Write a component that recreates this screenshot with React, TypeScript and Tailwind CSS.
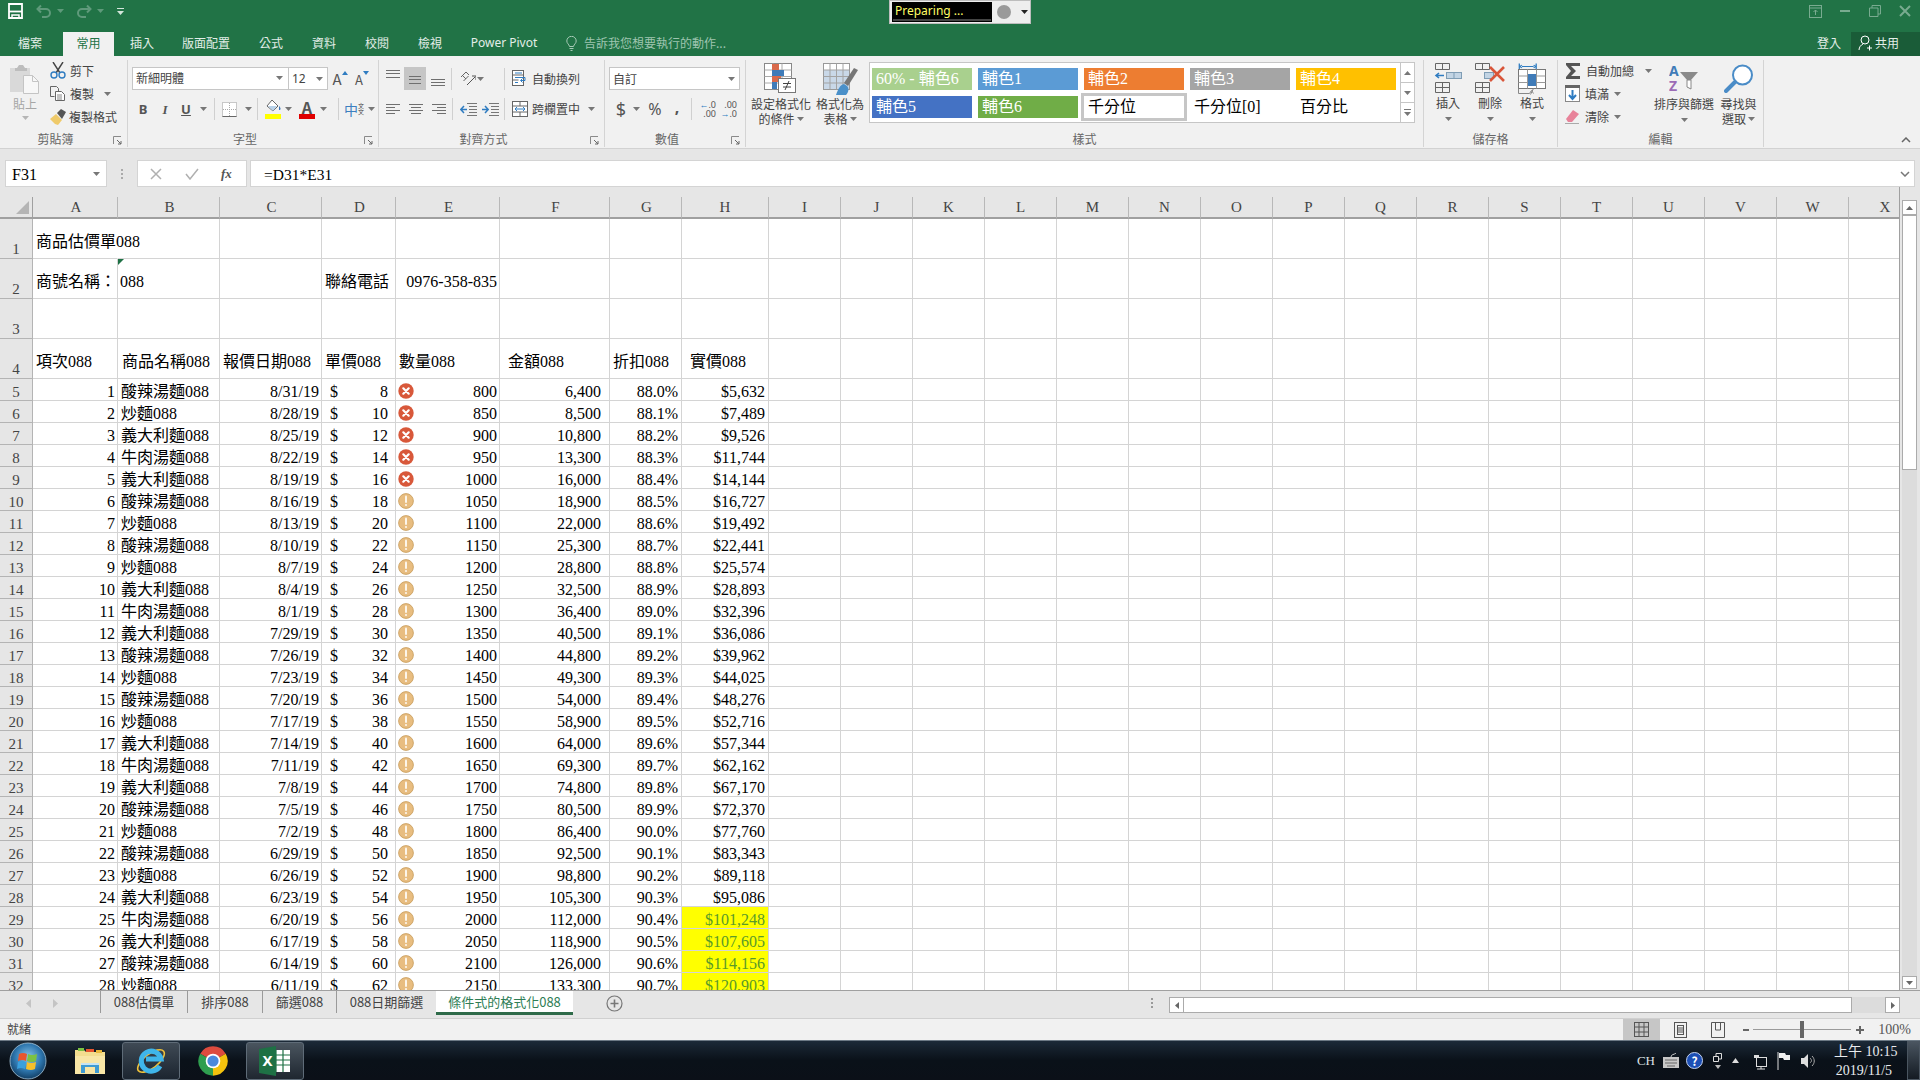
import React from 'react';

const SERIF = "[font-family:'Liberation_Serif','Noto_Sans_CJK_TC',serif]";
const UI = "[font-family:'Noto_Sans_CJK_TC','Noto_Sans',sans-serif]";

const Arrow = ({ c = '', fill = '#777' }: { c?: string; fill?: string }) => (
  <span className={'flex items-center justify-center shrink-0 ' + c}>
    <svg width="7" height="4" viewBox="0 0 7 4"><path d="M0 0h7L3.5 4z" fill={fill} /></svg>
  </span>
);

const Launcher = () => (
  <svg width="9" height="9" viewBox="0 0 9 9" className="absolute right-[5px] top-[5px]">
    <path d="M.5 8V.5H8" fill="none" stroke="#8a8a8a" />
    <path d="M4 4l4 4M8 5v3H5" fill="none" stroke="#666" />
  </svg>
);

const Sep = ({ c = '' }: { c?: string }) => <span className={'w-px h-[22px] bg-[#d0d0d0] shrink-0 ' + c} />;

function Group({ w, label, launcher, lc = '', children }: { w: string; label: string; launcher?: boolean; lc?: string; children: React.ReactNode }) {
  return (
    <div className={'h-[87px] mt-[4px] border-r border-[#d4d4d4] shrink-0 flex flex-col whitespace-nowrap ' + w}>
      <div className="h-[71px]">{children}</div>
      <div className={'relative h-[16px] text-center text-[12px] leading-[16px] text-[#666] ' + lc}>
        {label}
        {launcher && <Launcher />}
      </div>
    </div>
  );
}

const Lines = ({ ys, x1 = 1, x2 = 15, xs }: { ys: number[]; x1?: number; x2?: number; xs?: [number, number][] }) => (
  <svg width="16" height="23" viewBox="0 0 16 23">
    {ys.map((y, i) => (
      <path key={i} d={`M${xs ? xs[i][0] : x1} ${y + 0.5}H${xs ? xs[i][1] : x2}`} stroke="#6f6f6f" />
    ))}
  </svg>
);

/* ---------- ribbon icons ---------- */
const PasteIcon = () => (
  <svg width="30" height="30" viewBox="0 0 30 30">
    <rect x="0" y="4" width="20" height="24" fill="#d9d9d9" />
    <path d="M5 4h2l2-3h4l2 3h2v3H5z" fill="#bdbdbd" />
    <path d="M13.5 11.5h9l6 6v12h-15z" fill="#f7f7f7" stroke="#c4c4c4" />
    <path d="M22.5 11.5v6h6" fill="none" stroke="#c4c4c4" />
  </svg>
);
const Scissors = () => (
  <svg width="16" height="17" viewBox="0 0 16 17">
    <path d="M3 0l7 11M13 0L6 11" stroke="#444" strokeWidth="1.4" fill="none" />
    <circle cx="4" cy="13" r="3" fill="none" stroke="#2f7cc1" strokeWidth="1.4" />
    <circle cx="12" cy="13" r="3" fill="none" stroke="#2f7cc1" strokeWidth="1.4" />
  </svg>
);
const CopyIcon = () => (
  <svg width="15" height="15" viewBox="0 0 15 15">
    <path d="M.5.5h6l2 2v3M.5.5v10h4" fill="none" stroke="#666" />
    <path d="M5.5 5.5h6l3 3v6h-9z" fill="#fff" stroke="#666" />
    <path d="M7 9h5M7 11h5M7 13h5" stroke="#888" />
  </svg>
);
const Painter = () => (
  <svg width="17" height="17" viewBox="0 0 17 17">
    <path d="M0 11l6-5 6 6-4 5-3-1z" fill="#efca6a" />
    <path d="M7 5l4-4 5 3-4 7z" fill="#555" />
  </svg>
);
const BordersIcon = () => (
  <svg width="15" height="15" viewBox="0 0 15 15">
    <rect x=".5" y=".5" width="14" height="14" fill="#fff" stroke="#999" strokeDasharray="1 1" />
    <path d="M7.5 1v13M1 7.5h13" stroke="#aaa" strokeDasharray="1 1" />
    <path d="M.5 14.5h14" stroke="#666" />
  </svg>
);
const FillIcon = () => (
  <svg width="17" height="20" viewBox="0 0 17 20">
    <path d="M7 1l6 6-5 5-6-5z" fill="#fff" stroke="#666" />
    <path d="M3 7h9l-4 5z" fill="#b8d2ea" />
    <path d="M14 7c2 2 2 4 0 4z" fill="#3a73b5" />
    <rect x="0" y="15" width="16" height="5" fill="#ffff00" />
  </svg>
);
const FontColor = () => (
  <div className="flex flex-col items-center">
    <span className="text-[16px] leading-[14px] font-bold text-[#555]">A</span>
    <span className="w-[16px] h-[5px] bg-[#e00000]" />
  </div>
);
const PhoneticIcon = () => (
  <div className="flex items-center">
    <span className="text-[14px] leading-[16px] text-[#3d7fc0]">中</span>
    <span className="text-[6px] leading-[6px] text-[#444] w-[6px] whitespace-normal break-all">文文</span>
  </div>
);
const OrientIcon = () => (
  <svg width="16" height="16" viewBox="0 0 16 16">
    <path d="M1 6l5-5M3.5 10l5-5M2 4l4 4M6 1l3 3" stroke="#666" fill="none" />
    <path d="M7 14L15 6" stroke="#555" fill="none" />
    <path d="M12 5h4v4" stroke="#555" fill="none" />
  </svg>
);
const IndentL = () => (
  <svg width="17" height="13" viewBox="0 0 17 13">
    <path d="M7 .5h10M9 3.5h8M9 6.5h8M9 9.5h8M7 12.5h10" stroke="#777" />
    <path d="M7 6.5H1M4 3L.8 6.5 4 10" stroke="#2f7cc1" strokeWidth="1.5" fill="none" />
  </svg>
);
const IndentR = () => (
  <svg width="17" height="13" viewBox="0 0 17 13">
    <path d="M7 .5h10M9 3.5h8M9 6.5h8M9 9.5h8M7 12.5h10" stroke="#777" />
    <path d="M0 6.5h6M3 3l3.2 3.5L3 10" stroke="#2f7cc1" strokeWidth="1.5" fill="none" />
  </svg>
);
const WrapIcon = () => (
  <svg width="16" height="17" viewBox="0 0 16 17">
    <rect x=".5" y=".5" width="11" height="15" fill="#fff" stroke="#666" />
    <path d="M.5 5h11M.5 10h6" stroke="#666" />
    <path d="M3 3h7M3 7.5h10v3H9M3 12.5h3" stroke="#2f7cc1" fill="none" />
    <path d="M10.5 8.5L8.5 10.5l2 2" stroke="#2f7cc1" fill="none" />
  </svg>
);
const MergeIcon = () => (
  <svg width="16" height="16" viewBox="0 0 16 16">
    <rect x=".5" y=".5" width="15" height="15" fill="#fff" stroke="#666" />
    <path d="M.5 5h15M.5 11h15M8 .5V5M8 11v4.5" stroke="#666" />
    <path d="M3 8h10M5 6l-2 2 2 2M11 6l2 2-2 2" stroke="#2f7cc1" fill="none" />
  </svg>
);
const CondIcon = () => (
  <svg width="35" height="31" viewBox="0 0 35 31">
    <rect x=".5" y=".5" width="27" height="26" fill="#fff" stroke="#888" />
    <path d="M9 .5v26M18 .5v26M.5 7h27M.5 13.5h27M.5 20h27" stroke="#aaa" />
    <rect x="8" y="1" width="7" height="6" fill="#d9694a" />
    <rect x="8" y="7" width="12" height="6" fill="#3f7bb8" />
    <rect x="8" y="13" width="9" height="6" fill="#d9694a" />
    <rect x="8" y="19" width="5" height="7" fill="#3f7bb8" />
    <rect x="14.5" y="15.5" width="17" height="14" fill="#fff" stroke="#777" />
    <path d="M19 20.5h8M19 24h8M25 18l-4 9" stroke="#444" fill="none" />
  </svg>
);
const TableIcon = () => (
  <svg width="35" height="33" viewBox="0 0 35 33">
    <rect x=".5" y=".5" width="26" height="26" fill="#fff" stroke="#999" />
    <rect x="1" y="7" width="25" height="19" fill="#c9d8e8" />
    <path d="M7 .5v26M13.5 .5v26M20 .5v26M.5 7h26M.5 13.5h26M.5 20h26" stroke="#a3a3a3" />
    <path d="M35 7l-4-2-10 15 4 3z" fill="#777" />
    <path d="M21 21c-4 1-6 5-8 11h10c3-3 3-7 1-9z" fill="#4a90c9" />
  </svg>
);
const InsertIcon = () => (
  <svg width="28" height="31" viewBox="0 0 28 31">
    <path d="M1.5 .5h14v6h-14zM8.5 .5v6M1.5 19.5h14v10h-14zM8.5 19.5v10M1.5 24.5h14" fill="none" stroke="#666" />
    <rect x="12.5" y="9.5" width="15" height="6" fill="#c2d4e4" stroke="#7f9db5" />
    <path d="M20 9.5v6" stroke="#7f9db5" />
    <path d="M10 12.5H2M5 10l-3 2.5L5 15" stroke="#2f7cc1" strokeWidth="1.6" fill="none" />
  </svg>
);
const DeleteIcon = () => (
  <svg width="30" height="31" viewBox="0 0 30 31">
    <path d="M.5 .5h14v6H.5zM7.5 .5v6M.5 19.5h14v10H.5zM7.5 19.5v10M.5 24.5h14" fill="none" stroke="#666" />
    <rect x="9.5" y="9.5" width="9" height="6" fill="#c2d4e4" stroke="#7f9db5" />
    <path d="M15 4l14 14M29 4L15 18" stroke="#d9563a" strokeWidth="2.6" />
  </svg>
);
const FormatIcon = () => (
  <svg width="28" height="32" viewBox="0 0 28 32">
    <path d="M1 .5v6M14 .5v6M3 3.5h9M3 2L1.5 3.5 3 5M12 2l1.5 1.5L12 5" stroke="#2f7cc1" fill="none" transform="scale(1.3 1)" />
    <rect x=".5" y="6.5" width="27" height="19" fill="#fff" stroke="#777" />
    <path d="M9.5 6.5v19M18.5 6.5v19M.5 13h27M.5 19.5h27" stroke="#999" />
    <rect x="10" y="11" width="8" height="12" fill="#3f7bb8" />
    <path d="M.5 25.5v5h11l2-3 2 3M15.5 25.5l-3 6" fill="none" stroke="#888" />
  </svg>
);
const Sigma = () => (
  <svg width="16" height="16" viewBox="0 0 16 16" className="shrink-0"><path d="M1 0h14v3H6l5 5-5 5h9v3H1v-2l5-6-5-6z" fill="#555" /></svg>
);
const FillDown = () => (
  <svg width="15" height="17" viewBox="0 0 15 17" className="shrink-0">
    <rect x=".5" y=".5" width="14" height="16" fill="#fff" stroke="#888" />
    <rect x="0" y="0" width="15" height="3" fill="#666" />
    <path d="M7.5 5v9M4 10l3.5 4 3.5-4" stroke="#2f7cc1" strokeWidth="2" fill="none" />
  </svg>
);
const Eraser = () => (
  <svg width="15" height="15" viewBox="0 0 15 15" className="shrink-0">
    <path d="M8 1l6 4-7 8H3L1 10z" fill="#e8839a" />
    <path d="M0 14.5h14" stroke="#aaa" />
  </svg>
);
const SortIcon = () => (
  <svg width="30" height="28" viewBox="0 0 30 28">
    <text x="0" y="12" fontSize="14" fontWeight="700" fill="#3f7bb8" fontFamily="'Noto Sans',sans-serif">A</text>
    <text x="0" y="27" fontSize="14" fontWeight="700" fill="#9b6bb5" fontFamily="'Noto Sans',sans-serif">Z</text>
    <path d="M11 8h18l-7 8v9l-4-2v-7z" fill="#8a8a8a" />
    <path d="M18 16v7l4 2v-9z" fill="#fff" stroke="#888" />
  </svg>
);
const FindIcon = () => (
  <svg width="30" height="29" viewBox="0 0 30 29">
    <circle cx="18.5" cy="11" r="9.5" fill="#fff" stroke="#4a8cc7" strokeWidth="2" />
    <path d="M11 18L2 27" stroke="#4a8cc7" strokeWidth="4" strokeLinecap="round" />
  </svg>
);

/* ---------- data ---------- */
const N1 = '酸辣湯麵088', N2 = '炒麵088', N3 = '義大利麵088', N4 = '牛肉湯麵088';
const rows: [number, string, string, number, number, string, string, string][] = [
  [1, N1, '8/31/19', 8, 800, '6,400', '88.0%', '$5,632'],
  [2, N2, '8/28/19', 10, 850, '8,500', '88.1%', '$7,489'],
  [3, N3, '8/25/19', 12, 900, '10,800', '88.2%', '$9,526'],
  [4, N4, '8/22/19', 14, 950, '13,300', '88.3%', '$11,744'],
  [5, N3, '8/19/19', 16, 1000, '16,000', '88.4%', '$14,144'],
  [6, N1, '8/16/19', 18, 1050, '18,900', '88.5%', '$16,727'],
  [7, N2, '8/13/19', 20, 1100, '22,000', '88.6%', '$19,492'],
  [8, N1, '8/10/19', 22, 1150, '25,300', '88.7%', '$22,441'],
  [9, N2, '8/7/19', 24, 1200, '28,800', '88.8%', '$25,574'],
  [10, N3, '8/4/19', 26, 1250, '32,500', '88.9%', '$28,893'],
  [11, N4, '8/1/19', 28, 1300, '36,400', '89.0%', '$32,396'],
  [12, N3, '7/29/19', 30, 1350, '40,500', '89.1%', '$36,086'],
  [13, N1, '7/26/19', 32, 1400, '44,800', '89.2%', '$39,962'],
  [14, N2, '7/23/19', 34, 1450, '49,300', '89.3%', '$44,025'],
  [15, N1, '7/20/19', 36, 1500, '54,000', '89.4%', '$48,276'],
  [16, N2, '7/17/19', 38, 1550, '58,900', '89.5%', '$52,716'],
  [17, N3, '7/14/19', 40, 1600, '64,000', '89.6%', '$57,344'],
  [18, N4, '7/11/19', 42, 1650, '69,300', '89.7%', '$62,162'],
  [19, N3, '7/8/19', 44, 1700, '74,800', '89.8%', '$67,170'],
  [20, N1, '7/5/19', 46, 1750, '80,500', '89.9%', '$72,370'],
  [21, N2, '7/2/19', 48, 1800, '86,400', '90.0%', '$77,760'],
  [22, N1, '6/29/19', 50, 1850, '92,500', '90.1%', '$83,343'],
  [23, N2, '6/26/19', 52, 1900, '98,800', '90.2%', '$89,118'],
  [24, N3, '6/23/19', 54, 1950, '105,300', '90.3%', '$95,086'],
  [25, N4, '6/20/19', 56, 2000, '112,000', '90.4%', '$101,248'],
  [26, N3, '6/17/19', 58, 2050, '118,900', '90.5%', '$107,605'],
  [27, N1, '6/14/19', 60, 2100, '126,000', '90.6%', '$114,156'],
  [28, N2, '6/11/19', 62, 2150, '133,300', '90.7%', '$120,903'],
];
const colLetters = 'ABCDEFGHIJKLMNOPQRSTUVWX'.split('');
const GRID = 'grid grid-cols-[33px_85px_102px_102px_74px_104px_110px_72px_87px_repeat(15,72px)_51px]';

const XMark = () => (
  <svg width="16" height="16" viewBox="0 0 16 16" className="shrink-0 -mt-[3px]">
    <circle cx="8" cy="8" r="7.7" fill="#d8583a" />
    <path d="M5.3 5.3l5.4 5.4M10.7 5.3l-5.4 5.4" stroke="#fff" strokeWidth="2.2" strokeLinecap="round" />
  </svg>
);
const Bang = () => (
  <svg width="16" height="16" viewBox="0 0 16 16" className="shrink-0 -mt-[3px]">
    <circle cx="8" cy="8" r="7.4" fill="#e8bd80" stroke="#c79a58" strokeWidth=".8" />
    <path d="M8 3.4v5.6" stroke="#fdf6ea" strokeWidth="2" strokeLinecap="round" />
    <circle cx="8" cy="12" r="1.1" fill="#fdf6ea" />
  </svg>
);

const BASE = 'border-r border-b border-[#d4d4d4] flex items-center whitespace-nowrap leading-none text-[16px] text-black min-w-0';
const TALL = 'border-r border-b border-[#d4d4d4] h-[40px] flex items-start pt-[14px] whitespace-nowrap leading-[18px] text-[16px] text-black';

const RowHead = ({ n, tall }: { n: number; tall?: boolean }) => (
  <div className={'bg-[#e6e6e6] border-r border-b border-[#b4b4b4] text-[#444] text-[15px] flex justify-center leading-none ' + (tall ? 'h-[40px] items-end pb-[1px]' : 'h-[22px] items-center pt-[5px]')}>{n}</div>
);

const blanks = (count: number, cls: string, keyBase: string) =>
  Array.from({ length: count }, (_, i) => <div key={keyBase + i} className={cls} />);

function Sheet() {
  const tallRows: (string | null)[][] = [
    ['商品估價單088', null, null, null, null, null, null, null],
    ['商號名稱：', '088', null, '聯絡電話', '0976-358-835', null, null, null],
    [null, null, null, null, null, null, null, null],
    ['項次088', '商品名稱088', '報價日期088', '單價088', '數量088', '金額088', '折扣088', '實價088'],
  ];
  return (
    <div className={'w-[1899px] h-[803px] overflow-hidden shrink-0 ' + SERIF}>
      <div className={GRID + ' h-[32px] bg-[#e6e6e6] items-end'}>
        <div className="relative h-[22px] border-r border-b-2 border-[#a0a0a0] flex items-end justify-end pr-[3px] pb-[3px]">
          <svg width="13" height="13" viewBox="0 0 13 13"><path d="M13 0v13H0z" fill="#b5b5b5" /></svg>
        </div>
        {colLetters.map((c, i) => (
          <div
            key={c}
            className={
              'h-[22px] border-r last:border-r-0 border-b-2 border-[#b8b8b8] border-b-[#a0a0a0] flex items-center justify-center text-[15px] text-[#444] leading-none ' +
              (i < 7 ? 'pl-[2px]' : i === 23 ? 'pl-[21px]' : '')
            }
          >
            {c}
          </div>
        ))}
      </div>
      <div className={GRID + ' bg-white'}>
        {tallRows.map((r, ri) => (
          <React.Fragment key={ri}>
            <RowHead n={ri + 1} tall />
            {r.map((t, ci) => {
              const pad =
                ri === 3 && (ci === 5 || ci === 7) ? 'pl-[8px]' : ri === 1 && ci === 4 ? 'justify-end pr-[2px]' : ci === 1 && ri === 1 ? 'pl-[2px]' : ri === 3 && ci === 1 ? 'pl-[4px]' : 'pl-[3px]';
              const extra = ri === 0 && ci === 0 ? ' border-r-transparent' : '';
              return (
                <div key={ci} className={TALL + ' relative ' + pad + extra}>
                  {t}
                  {ri === 1 && ci === 1 && (
                    <svg width="6" height="6" viewBox="0 0 6 6" className="absolute left-0 top-0"><path d="M0 0h6L0 6z" fill="#1e7145" /></svg>
                  )}
                </div>
              );
            })}
            {blanks(16, TALL, 't' + ri + '-')}
          </React.Fragment>
        ))}
        {rows.map((r, i) => {
          const hi = i >= 24;
          return (
            <React.Fragment key={r[0]}>
              <RowHead n={i + 5} />
              <div className={BASE + ' h-[22px] justify-end pr-[2px] pt-[5px]'}>{r[0]}</div>
              <div className={BASE + ' h-[22px] pl-[3px] pt-[5px]'}>{r[1]}</div>
              <div className={BASE + ' h-[22px] justify-end pr-[2px] pt-[5px]'}>{r[2]}</div>
              <div className={BASE + ' h-[22px] justify-between pl-[8px] pr-[7px] pt-[5px]'}>
                <span>$</span>
                <span>{r[3]}</span>
              </div>
              <div className={BASE + ' h-[22px] justify-between pl-[2px] pr-[2px] pt-[5px]'}>
                {i < 5 ? <XMark /> : <Bang />}
                <span>{r[4]}</span>
              </div>
              <div className={BASE + ' h-[22px] justify-end pr-[8px] pt-[5px]'}>{r[5]}</div>
              <div className={BASE + ' h-[22px] justify-end pr-[3px] pt-[5px]'}>{r[6]}</div>
              <div className={hi ? 'border-r border-b border-[#d4d4d4] flex items-center whitespace-nowrap leading-none text-[16px] min-w-0 h-[22px] justify-end pr-[3px] pt-[5px] bg-[#ffff00] text-[#5a9a2a]' : BASE + ' h-[22px] justify-end pr-[3px] pt-[5px]'}>{r[7]}</div>
              {blanks(16, BASE + ' h-[22px]', 'r' + i + '-')}
            </React.Fragment>
          );
        })}
      </div>
    </div>
  );
}

const styleCell = 'h-[22px] flex items-center pl-[4px] text-[16px] leading-none whitespace-nowrap ' + SERIF;

export default function App() {
  return (
    <div className={'relative w-[1920px] h-[1080px] overflow-hidden flex flex-col bg-[#f1f1f1] ' + UI}>
      {/* title bar */}
      <div className="h-[32px] bg-[#217346] flex items-start pt-[3px] shrink-0">
        <div className="h-[16px] w-full flex items-center">
          <svg width="15" height="16" viewBox="0 0 15 16" className="ml-[8px]">
            <path d="M1 1h13v14H1z" fill="none" stroke="#fff" strokeWidth="1.8" />
            <path d="M1 8.5h13" stroke="#fff" strokeWidth="1.8" />
            <path d="M4 15v-3h7v3" fill="none" stroke="#fff" strokeWidth="1.5" />
          </svg>
          <svg width="16" height="14" viewBox="0 0 16 14" className="ml-[13px]">
            <path d="M2 5h8a4 4 0 0 1 0 8H6M5 1.5L1.5 5 5 8.5" fill="none" stroke="#5f9a7b" strokeWidth="2" />
          </svg>
          <Arrow c="w-[10px] ml-[3px]" fill="#5f9a7b" />
          <svg width="16" height="14" viewBox="0 0 16 14" className="ml-[11px]">
            <path d="M14 5H6a4 4 0 0 0 0 8h4M11 1.5L14.5 5 11 8.5" fill="none" stroke="#5f9a7b" strokeWidth="2" />
          </svg>
          <Arrow c="w-[10px] ml-[3px]" fill="#5f9a7b" />
          <svg width="7" height="7" viewBox="0 0 7 7" className="ml-[12px]">
            <path d="M0 .5h7" stroke="#d5e6dc" />
            <path d="M0 3h7L3.5 7z" fill="#d5e6dc" />
          </svg>
          <div className="ml-auto flex items-center">
            <div className="w-[30px] flex justify-center">
              <svg width="13" height="13" viewBox="0 0 13 13"><rect x=".5" y=".5" width="12" height="12" fill="none" stroke="#79ab90" /><path d="M.5 3h12M6.5 10V5M4.5 7l2-2 2 2" stroke="#79ab90" fill="none" /></svg>
            </div>
            <div className="w-[30px] flex justify-center"><span className="w-[10px] h-[2px] bg-[#79ab90]" /></div>
            <div className="w-[30px] flex justify-center">
              <svg width="12" height="12" viewBox="0 0 12 12"><path d="M3 3V.5h8.500V9H9M.5 3h8.500v8.500H.5z" fill="none" stroke="#79ab90" /></svg>
            </div>
            <div className="w-[30px] flex justify-center">
              <svg width="12" height="12" viewBox="0 0 12 12"><path d="M1 1l10 10M11 1L1 11" stroke="#79ab90" strokeWidth="2" /></svg>
            </div>
          </div>
        </div>
      </div>

      {/* tabs */}
      <div className="h-[24px] bg-[#217346] flex items-center pb-[2px] shrink-0 text-[12px] text-[#e3eee8]">
        <div className="w-[60px] text-center">檔案</div>
        <div className="ml-[3px] w-[51px] h-[24px] self-start bg-[#f1f1f1] text-[#217346] flex items-center justify-center pb-[2px]">常用</div>
        <div className="w-[56px] text-center">插入</div>
        <div className="w-[72px] text-center">版面配置</div>
        <div className="w-[58px] text-center">公式</div>
        <div className="w-[48px] text-center">資料</div>
        <div className="w-[58px] text-center">校閱</div>
        <div className="w-[48px] text-center">檢視</div>
        <div className="w-[100px] text-center [font-family:'Noto_Sans',sans-serif]">Power Pivot</div>
        <svg width="11" height="15" viewBox="0 0 11 15" className="ml-[12px]">
          <path d="M3.5 10.5C3 8 .8 7.5.8 5a4.700 4.700 0 0 1 9.400 0c0 2.500-2.200 3-2.700 5.500z" fill="none" stroke="#a7cab6" />
          <path d="M3.500 12.500h4M4.500 14.500h2" stroke="#a7cab6" />
        </svg>
        <div className="ml-[7px] text-[#9fc5b0]">告訴我您想要執行的動作...</div>
        <div className="ml-auto mr-[10px]">登入</div>
        <div className="w-[69px] h-[24px] self-start bg-[#1a5c38] flex items-center pl-[7px] pb-[2px] gap-[3px]">
          <svg width="14" height="16" viewBox="0 0 14 16">
            <circle cx="7" cy="5" r="4" fill="none" stroke="#fff" />
            <path d="M1 15c0-3 2-5 4-6M9 13h5M11.500 10.500v5" stroke="#fff" fill="none" />
          </svg>
          <span>共用</span>
        </div>
      </div>

      {/* ribbon */}
      <div className="h-[93px] flex shrink-0 text-[12px] text-[#444] border-b border-[#d2d2d2] leading-none">
        <Group w="w-[128px]" label="剪貼簿" launcher lc="pr-[16px]">
          <div className="flex">
            <div className="w-[50px] flex flex-col items-center pt-[4px] text-[#a6a6a6]">
              <PasteIcon />
              <div className="mt-[3px] leading-[14px]">貼上</div>
              <Arrow c="mt-[5px]" fill="#b5b5b5" />
            </div>
            <div className="-mt-[1px] flex flex-col">
              <div className="h-[23px] flex items-center gap-[4px]"><Scissors /><span>剪下</span></div>
              <div className="h-[23px] flex items-center gap-[5px]"><CopyIcon /><span>複製</span><Arrow c="ml-[5px]" /></div>
              <div className="h-[23px] flex items-center gap-[2px]"><Painter /><span>複製格式</span></div>
            </div>
          </div>
        </Group>

        <Group w="w-[251px]" label="字型" launcher lc="pr-[16px]">
          <div className="pt-[7px] pl-[4px]">
            <div className="flex items-center">
              <div className="w-[196px] h-[23px] bg-white border border-[#c6c6c6] flex">
                <div className="w-[156px] flex items-center pl-[3px] pb-[1px] border-r border-[#c6c6c6]">新細明體<Arrow c="ml-auto mr-[5px]" /></div>
                <div className="flex-1 flex items-center pl-[3px] [font-family:'Noto_Sans',sans-serif]">12<Arrow c="ml-auto mr-[4px]" /></div>
              </div>
              <div className="ml-[1px] w-[22px] flex justify-center items-start text-[#555]"><span className="text-[15px]">A</span><svg width="6" height="4" viewBox="0 0 6 4"><path d="M3 0l3 4H0z" fill="#2f7cc1" /></svg></div>
              <div className="w-[22px] flex justify-center items-start text-[#555]"><span className="text-[13px] mt-[2px]">A</span><svg width="6" height="4" viewBox="0 0 6 4"><path d="M3 4L0 0h6z" fill="#2f7cc1" /></svg></div>
            </div>
            <div className="mt-[7px] h-[24px] flex items-center">
              <span className="w-[22px] text-center font-bold text-[13px] text-[#555] [font-family:'Noto_Sans',sans-serif]">B</span>
              <span className="w-[22px] text-center italic font-bold text-[13px] text-[#555] [font-family:'Liberation_Serif',serif]">I</span>
              <span className="w-[20px] text-center underline font-bold text-[13px] text-[#555] [font-family:'Noto_Sans',sans-serif]">U</span>
              <Arrow c="w-[14px]" />
              <Sep c="ml-[4px]" />
              <span className="ml-[7px] w-[15px] flex"><BordersIcon /></span>
              <Arrow c="w-[14px] ml-[4px]" />
              <Sep c="ml-[2px]" />
              <span className="ml-[7px] w-[17px] flex"><FillIcon /></span>
              <Arrow c="w-[12px]" />
              <span className="ml-[3px] w-[20px] flex justify-center"><FontColor /></span>
              <Arrow c="w-[12px]" />
              <Sep c="ml-[9px]" />
              <span className="ml-[5px] w-[21px] flex"><PhoneticIcon /></span>
              <Arrow c="w-[12px]" />
            </div>
          </div>
        </Group>

        <Group w="w-[226px]" label="對齊方式" launcher lc="pr-[16px]">
          <div className="pt-[7px]">
            <div className="h-[23px] flex items-center">
              <span className="ml-[6px] w-[16px] flex"><Lines ys={[3, 6, 10]} /></span>
              <span className="ml-[3px] w-[22px] h-[23px] bg-[#c6c6c6] flex justify-center"><Lines ys={[9, 12, 16]} x1={2} x2={14} /></span>
              <span className="ml-[4px] w-[16px] flex"><Lines ys={[12, 15, 18]} /></span>
              <Sep c="ml-[5px]" />
              <span className="ml-[8px] w-[16px] flex"><OrientIcon /></span>
              <Arrow c="w-[9px]" />
              <Sep c="ml-[19px]" />
              <span className="ml-[7px] w-[16px] flex"><WrapIcon /></span>
              <span className="ml-[4px]">自動換列</span>
            </div>
            <div className="mt-[7px] h-[24px] flex items-center">
              <span className="ml-[6px] w-[16px] flex"><Lines ys={[6, 9, 12, 15]} xs={[[1, 15], [1, 10], [1, 15], [1, 10]]} /></span>
              <span className="ml-[7px] w-[16px] flex"><Lines ys={[6, 9, 12, 15]} xs={[[1, 15], [3, 13], [1, 15], [3, 13]]} /></span>
              <span className="ml-[7px] w-[16px] flex"><Lines ys={[6, 9, 12, 15]} xs={[[1, 15], [6, 15], [1, 15], [6, 15]]} /></span>
              <Sep c="ml-[5px]" />
              <span className="ml-[7px] w-[17px] flex"><IndentL /></span>
              <span className="ml-[5px] w-[17px] flex"><IndentR /></span>
              <Sep c="ml-[5px]" />
              <span className="ml-[7px] w-[16px] flex"><MergeIcon /></span>
              <span className="ml-[4px]">跨欄置中</span>
              <Arrow c="ml-[8px]" />
            </div>
          </div>
        </Group>

        <Group w="w-[141px]" label="數值" launcher lc="pr-[16px]">
          <div className="pt-[7px] pl-[4px]">
            <div className="w-[131px] h-[23px] bg-white border border-[#c6c6c6] flex items-center pl-[3px]">自訂<Arrow c="ml-auto mr-[4px]" /></div>
            <div className="mt-[7px] h-[24px] flex items-center [font-family:'Noto_Sans',sans-serif] text-[#555]">
              <span className="ml-[2px] w-[20px] text-center text-[18px]">$</span>
              <Arrow c="w-[11px]" />
              <span className="ml-[3px] w-[20px] text-center text-[16px]">%</span>
              <span className="ml-[2px] w-[20px] text-center text-[16px] font-bold -mt-[4px]">,</span>
              <Sep c="ml-[4px]" />
              <span className="ml-[4px] w-[20px] flex flex-col items-end text-[9px] leading-[9px]">
                <span className="flex items-center"><span className="text-[#2f7cc1] text-[9px]">←</span>.0</span><span>.00</span>
              </span>
              <span className="ml-[1px] w-[20px] flex flex-col items-end text-[9px] leading-[9px]">
                <span>.00</span><span className="flex items-center"><span className="text-[#2f7cc1] text-[9px]">→</span>.0</span>
              </span>
            </div>
          </div>
        </Group>

        <Group w="w-[678px]" label="樣式">
          <div className="flex">
            <div className="ml-[4px] w-[62px] flex flex-col items-center pt-[3px]">
              <CondIcon />
              <div className="mt-[2px] leading-[15px] text-center whitespace-nowrap">設定格式化</div>
              <div className="leading-[15px] flex items-center">的條件<Arrow c="ml-[2px]" /></div>
            </div>
            <div className="w-[56px] flex flex-col items-center pt-[3px]">
              <TableIcon />
              <div className="leading-[15px] whitespace-nowrap">格式化為</div>
              <div className="leading-[15px] flex items-center">表格<Arrow c="ml-[2px]" /></div>
            </div>
            <div className="ml-[1px] mt-[2px] w-[546px] h-[61px] bg-white border border-[#c6c6c6] flex">
              <div className="w-[530px] pl-[2px] pt-[5px] grid grid-cols-[repeat(5,100px)] gap-x-[6px] gap-y-[6px] auto-rows-[22px]">
                <div className={styleCell + ' bg-[#a9d08e] text-white'}>60% - 輔色6</div>
                <div className={styleCell + ' bg-[#5b9bd5] text-white'}>輔色1</div>
                <div className={styleCell + ' bg-[#ed7d31] text-white'}>輔色2</div>
                <div className={styleCell + ' bg-[#a5a5a5] text-white'}>輔色3</div>
                <div className={styleCell + ' bg-[#ffc000] text-white'}>輔色4</div>
                <div className={styleCell + ' bg-[#4472c4] text-white'}>輔色5</div>
                <div className={styleCell + ' bg-[#70ad47] text-white'}>輔色6</div>
                <div className={styleCell + ' bg-white text-black ring-[3px] ring-[#c6c6c6]'}>千分位</div>
                <div className={styleCell + ' text-black'}>千分位[0]</div>
                <div className={styleCell + ' text-black'}>百分比</div>
              </div>
              <div className="flex-1 flex flex-col border-l border-[#c6c6c6] bg-white">
                <div className="h-[20px] flex items-center justify-center border-b border-[#c6c6c6]"><svg width="7" height="4" viewBox="0 0 7 4"><path d="M3.500 0L7 4H0z" fill="#777" /></svg></div>
                <div className="h-[20px] flex items-center justify-center border-b border-[#c6c6c6]"><svg width="7" height="4" viewBox="0 0 7 4"><path d="M0 0h7L3.500 4z" fill="#777" /></svg></div>
                <div className="flex-1 flex items-center justify-center"><svg width="7" height="7" viewBox="0 0 7 7"><path d="M0 .5h7" stroke="#777" /><path d="M0 3h7L3.500 7z" fill="#777" /></svg></div>
              </div>
            </div>
          </div>
        </Group>

        <Group w="w-[134px]" label="儲存格">
          <div className="flex pl-[3px]">
            {[
              { l: '插入', i: <InsertIcon /> },
              { l: '刪除', i: <DeleteIcon /> },
              { l: '格式', i: <FormatIcon /> },
            ].map((b) => (
              <div key={b.l} className="w-[42px] flex flex-col items-center pt-[3px]">
                <div className="h-[32px] flex items-start">{b.i}</div>
                <div className="leading-[15px]">{b.l}</div>
                <Arrow c="mt-[7px]" />
              </div>
            ))}
          </div>
        </Group>

        <Group w="w-[206px]" label="編輯">
          <div className="flex">
            <div className="ml-[7px] w-[89px] shrink-0 -mt-[1px] flex flex-col">
              <div className="h-[23px] flex items-center gap-[5px]"><Sigma /><span>自動加總</span><Arrow c="ml-[6px]" /></div>
              <div className="h-[23px] flex items-center gap-[5px]"><FillDown /><span>填滿</span><Arrow /></div>
              <div className="h-[23px] flex items-center gap-[5px]"><Eraser /><span>清除</span><Arrow /></div>
            </div>
            <div className="w-[60px] flex flex-col items-center pt-[4px]">
              <div className="h-[32px] flex items-start"><SortIcon /></div>
              <div className="leading-[15px] whitespace-nowrap">排序與篩選</div>
              <Arrow c="mt-[7px]" />
            </div>
            <div className="w-[50px] flex flex-col items-center pt-[4px]">
              <div className="h-[32px] flex items-start"><FindIcon /></div>
              <div className="leading-[15px]">尋找與</div>
              <div className="leading-[15px] flex items-center">選取<Arrow c="ml-[2px]" /></div>
            </div>
          </div>
        </Group>

        <div className="flex-1 flex items-end justify-end pr-[9px] pb-[5px]">
          <svg width="10" height="6" viewBox="0 0 10 6"><path d="M1 5l4-4 4 4" fill="none" stroke="#666" strokeWidth="1.5" /></svg>
        </div>
      </div>

      {/* formula bar */}
      <div className="h-[38px] bg-[#e6e6e6] pt-[11px] flex shrink-0">
        <div className={'ml-[5px] w-[102px] h-[27px] bg-white border border-[#d4d4d4] flex items-center pl-[6px] pt-[2px] text-[16px] text-black ' + SERIF}>
          F31
          <Arrow c="ml-auto mr-[6px] -mt-[2px]" />
        </div>
        <div className="w-[30px] flex flex-col items-center justify-center gap-[2px]">
          <span className="w-[2px] h-[2px] bg-[#aaa]" /><span className="w-[2px] h-[2px] bg-[#aaa]" /><span className="w-[2px] h-[2px] bg-[#aaa]" />
        </div>
        <div className="w-[110px] h-[27px] bg-white border border-[#d4d4d4] flex items-center">
          <svg width="12" height="12" viewBox="0 0 12 12" className="ml-[12px]"><path d="M1 1l10 10M11 1L1 11" stroke="#b0b0b0" strokeWidth="1.5" /></svg>
          <svg width="14" height="12" viewBox="0 0 14 12" className="ml-[23px]"><path d="M1 6l4 5 8-10" fill="none" stroke="#b0b0b0" strokeWidth="1.5" /></svg>
          <span className={'ml-[22px] italic font-bold text-[13px] text-[#555] ' + SERIF}>fx</span>
        </div>
        <div className={'ml-[3px] w-[1665px] h-[27px] bg-white border border-[#d4d4d4] flex items-center pl-[13px] pt-[2px] text-[15.5px] text-black ' + SERIF}>
          =D31*E31
          <svg width="10" height="6" viewBox="0 0 10 6" className="ml-auto mr-[4px] -mt-[2px]"><path d="M1 1l4 4 4-4" fill="none" stroke="#777" strokeWidth="1.500" /></svg>
        </div>
      </div>

      {/* sheet */}
      <div className="h-[803px] flex shrink-0 bg-[#e6e6e6] border-b border-[#a0a0a0] box-content">
        <Sheet />
        <div className="w-[21px] border-l border-[#a0a0a0] flex flex-col pl-[2px] pt-[13px] pb-[1px]">
          <div className="w-[15px] h-[15px] bg-white border border-[#ababab] flex items-center justify-center"><svg width="7" height="4" viewBox="0 0 7 4"><path d="M3.500 0L7 4H0z" fill="#666" /></svg></div>
          <div className="w-[15px] h-[255px] bg-white border border-[#ababab]" />
          <div className="w-[15px] flex-1 bg-[#dcdcdc]" />
          <div className="w-[15px] h-[13px] bg-white border border-[#ababab] flex items-center justify-center"><svg width="7" height="4" viewBox="0 0 7 4"><path d="M0 0h7L3.500 4z" fill="#666" /></svg></div>
        </div>
      </div>

      {/* sheet tabs */}
      <div className="h-[27px] bg-[#e6e6e6] flex shrink-0 text-[13px] text-[#444] whitespace-nowrap">
        <div className="w-[100px] flex items-center pl-[26px] gap-[22px] pb-[3px]">
          <svg width="5" height="9" viewBox="0 0 5 9"><path d="M5 0v9L0 4.500z" fill="#c4c4c4" /></svg>
          <svg width="5" height="9" viewBox="0 0 5 9"><path d="M0 0v9l5-4.500z" fill="#c4c4c4" /></svg>
        </div>
        <div className="w-[87px] h-[22px] border-l border-[#9a9a9a] flex items-center justify-center">088估價單</div>
        <div className="w-[75px] h-[22px] border-l border-[#9a9a9a] flex items-center justify-center">排序088</div>
        <div className="w-[74px] h-[22px] border-l border-[#9a9a9a] flex items-center justify-center">篩選088</div>
        <div className="w-[100px] h-[22px] border-l border-[#9a9a9a] flex items-center justify-center">088日期篩選</div>
        <div className="w-[137px] h-[24px] bg-white border-b-[3px] border-[#2f6b4a] flex items-center justify-center text-[#2e7d55]">條件式的格式化088</div>
        <div className="ml-[33px] h-[27px] flex items-center pb-[3px]">
          <svg width="17" height="17" viewBox="0 0 17 17"><circle cx="8.500" cy="8.500" r="7.500" fill="none" stroke="#777" strokeWidth="1.200" /><path d="M8.500 4.500v8M4.500 8.500h8" stroke="#777" strokeWidth="1.600" /></svg>
        </div>
        <div className="ml-[528px] h-[24px] flex flex-col justify-center gap-[2px]">
          <span className="w-[2px] h-[2px] bg-[#999]" /><span className="w-[2px] h-[2px] bg-[#999]" /><span className="w-[2px] h-[2px] bg-[#999]" />
        </div>
        <div className="ml-[16px] mt-[6px] h-[16px] flex">
          <div className="w-[15px] bg-white border border-[#ababab] flex items-center justify-center"><svg width="4" height="7" viewBox="0 0 4 7"><path d="M4 0v7L0 3.500z" fill="#666" /></svg></div>
          <div className="w-[668px] bg-white border border-l-0 border-[#ababab]" />
          <div className="w-[33px] bg-[#dcdcdc]" />
          <div className="w-[15px] bg-white border border-[#ababab] flex items-center justify-center"><svg width="4" height="7" viewBox="0 0 4 7"><path d="M0 0v7l4-3.500z" fill="#666" /></svg></div>
        </div>
      </div>

      {/* status bar */}
      <div className="h-[22px] bg-[#f1f1f1] border-t border-[#d0d0d0] flex items-center shrink-0 text-[12px] text-[#444]">
        <span className="ml-[7px] pb-[2px]">就緒</span>
        <div className="ml-auto w-[37px] h-full bg-[#c6c6c6] flex items-center justify-center">
          <svg width="15" height="15" viewBox="0 0 15 15"><rect x=".5" y=".5" width="14" height="14" fill="none" stroke="#555" /><path d="M5 .5v14M10 .5v14M.5 5h14M.5 10h14" stroke="#555" /></svg>
        </div>
        <div className="w-[40px] flex justify-center">
          <svg width="13" height="16" viewBox="0 0 13 16"><rect x=".5" y=".5" width="12" height="15" fill="none" stroke="#555" /><rect x="3.500" y="3.500" width="6" height="9" fill="none" stroke="#555" /><path d="M4 6h5M4 8h5M4 10h5" stroke="#555" /></svg>
        </div>
        <div className="w-[36px] flex justify-center">
          <svg width="14" height="16" viewBox="0 0 14 16"><path d="M.5 15.500V.5h13v15zM4.500 1v7h5V1" fill="none" stroke="#555" /></svg>
        </div>
        <span className="ml-[7px] w-[6px] h-[2px] bg-[#666]" />
        <div className="ml-[4px] w-[98px] h-px bg-[#9a9a9a] relative flex justify-center">
          <span className="absolute top-[-8px] w-[4px] h-[17px] bg-[#666]" />
        </div>
        <svg width="8" height="8" viewBox="0 0 8 8" className="ml-[5px]"><path d="M4 0v8M0 4h8" stroke="#666" strokeWidth="2" /></svg>
        <span className={'ml-[14px] mr-[9px] text-[14px] text-[#555] ' + SERIF}>100%</span>
      </div>

      {/* taskbar */}
      <div className="h-[40px] border-t border-[#6d7a85] bg-linear-to-b from-[#1c2a38] via-[#0a1119] to-[#0b1018] flex items-center shrink-0 text-white">
        <div className="w-[58px] flex justify-center pr-[3px]">
          <svg width="38" height="38" viewBox="0 0 38 38">
            <defs>
              <radialGradient id="orb" cx="50%" cy="40%" r="60%"><stop offset="0%" stopColor="#8cc6ea" /><stop offset="60%" stopColor="#2f78b0" /><stop offset="100%" stopColor="#123f66" /></radialGradient>
            </defs>
            <circle cx="19" cy="19" r="18" fill="url(#orb)" stroke="#a7c7dc" strokeWidth=".8" />
            <path d="M10 12q4-2 8 0l-1 7q-4-2-8 0z" fill="#e8562e" />
            <path d="M19 12q4 2 9 0l-1 7q-4 2-9 0z" fill="#7cc242" />
            <path d="M9 20q4-2 8 0l-1 7q-4-2-8 0z" fill="#3aa0de" />
            <path d="M18 20q4 2 9 0l-1 7q-4 2-9 0z" fill="#f6c02c" />
          </svg>
        </div>
        <div className="w-[64px] flex justify-center">
          <svg width="32" height="30" viewBox="0 0 32 30">
            <path d="M1 4h9l2 2h19v22H1z" fill="#f3dd8f" />
            <path d="M4 2h6v3H4z" fill="#7cc242" /><path d="M12 3h8v3h-8z" fill="#e8562e" /><path d="M22 4h6v3h-6z" fill="#e9b83c" />
            <path d="M1 10h30v18H1z" fill="#f8e6a6" />
            <path d="M7 27V17h18v10h-4v-6H11v6z" fill="#3f9bd3" />
            <path d="M7 17h18v2H7z" fill="#c5e3f3" />
          </svg>
        </div>
        <div className="w-[58px] h-[38px] rounded-[3px] border border-[#5f6c78] bg-linear-to-b from-[#3f4a55] to-[#1c2530] flex items-center justify-center">
          <svg width="32" height="32" viewBox="0 0 32 32">
            <ellipse cx="16" cy="16" rx="16" ry="7" transform="rotate(-38 16 16)" fill="none" stroke="#f0c23a" strokeWidth="1.600" />
            <path d="M25 21a10 10 0 1 1 1-7H11" fill="none" stroke="#3fb5ea" strokeWidth="5" />
          </svg>
        </div>
        <div className="w-[66px] flex justify-center">
          <svg width="32" height="32" viewBox="0 0 24 24">
            <path d="M12 12L2.470 6.500A11 11 0 0 1 21.530 6.500z" fill="#dd4b3e" />
            <path d="M12 12L21.530 6.500A11 11 0 0 1 12 23z" fill="#f4c20d" />
            <path d="M12 12L12 23A11 11 0 0 1 2.470 6.500z" fill="#2f9e4f" />
            <circle cx="12" cy="12" r="5.500" fill="#fff" />
            <circle cx="12" cy="12" r="4.200" fill="#4a89dc" />
          </svg>
        </div>
        <div className="w-[58px] h-[38px] rounded-[3px] border border-[#5f6c78] bg-linear-to-b from-[#4a555f] to-[#1f2730] flex items-center justify-center">
          <svg width="32" height="30" viewBox="0 0 32 30">
            <rect x="13" y="4" width="18" height="22" fill="#fff" />
            <path d="M17 4v22M24 4v22M13 9h18M13 14h18M13 19h18" stroke="#1e7145" strokeWidth="1.200" />
            <path d="M0 3l17-3v30L0 27z" fill="#1e7145" />
            <text x="3.500" y="20" fontSize="15" fontWeight="700" fill="#fff" fontFamily="'Noto Sans',sans-serif">X</text>
          </svg>
        </div>
        <div className="ml-auto flex items-center text-[12px]">
          <span className={'text-[13px] text-[#dfe3e7] mr-[8px] ' + SERIF}>CH</span>
          <svg width="16" height="15" viewBox="0 0 16 15" className="mr-[7px]"><rect x="0" y="4" width="16" height="11" fill="#c8c8c8" /><path d="M2 7h12M2 10h12M4 13h8" stroke="#666" /><path d="M8 4c0-3 3-2 5-4" stroke="#ccc" fill="none" /></svg>
          <span className="w-[17px] h-[17px] rounded-full bg-[#1c4fb5] border border-[#c4d2ee] text-white text-[12px] leading-[15px] font-bold text-center mr-[10px]">?</span>
          <div className="flex flex-col items-center mr-[10px] gap-[3px]">
            <svg width="9" height="9" viewBox="0 0 9 9"><path d="M.5 3.500h5v5h-5zM3 3V.5h5.500V6H6" fill="none" stroke="#ddd" /></svg>
            <svg width="6" height="4" viewBox="0 0 6 4"><path d="M0 0h6L3 4z" fill="#bbb" /></svg>
          </div>
          <svg width="7" height="5" viewBox="0 0 7 5" className="mr-[14px]"><path d="M3.500 0L7 5H0z" fill="#ddd" /></svg>
          <svg width="14" height="18" viewBox="0 0 14 18" className="mr-[10px]"><rect x="1" y="3" width="5" height="3" fill="#ddd" /><rect x="3.500" y="5.500" width="10" height="9" fill="none" stroke="#ddd" /><path d="M8 15v2M4 17h8" stroke="#ddd" /></svg>
          <svg width="13" height="18" viewBox="0 0 13 18" className="mr-[11px]"><path d="M1 0v18" stroke="#ddd" /><path d="M2 1h6l1 2h4v5H7L6 6H2z" fill="#eee" /></svg>
          <svg width="14" height="14" viewBox="0 0 14 14" className="mr-[19px]"><path d="M0 4h3l4-4v14l-4-4H0z" fill="#ddd" /><path d="M9 4c2 2 2 4 0 4.500M11 2c3 3 3 7 0 10" stroke="#aaa" fill="none" /></svg>
          <div className={'w-[60px] text-center text-[14px] leading-[19px] whitespace-nowrap text-[#e8ebee] ' + SERIF}>
            <div>上午 10:15</div>
            <div>2019/11/5</div>
          </div>
          <div className="ml-[13px] w-[13px] h-[39px] border border-[#4a5560] bg-linear-to-b from-[#4a5560] to-[#141b23]" />
        </div>
      </div>

      {/* floating recorder widget */}
      <div className="absolute top-0 left-[889px] w-[142px] h-[24px] bg-[#eeeeee] border border-[#bdbdbd] flex items-center pl-[2px]">
        <div className="relative w-[100px] h-[20px] bg-black text-[#ffff66] text-[12px] leading-[18px] pl-[3px] [font-family:'Noto_Sans',sans-serif]">
          Preparing ...
          <span className="absolute left-[1px] right-[1px] bottom-[1px] h-[2px] bg-[#444]" />
        </div>
        <span className="ml-[5px] w-[14px] h-[14px] rounded-full bg-[#9a9a9a]" />
        <Arrow c="ml-[10px]" fill="#222" />
      </div>
    </div>
  );
}
